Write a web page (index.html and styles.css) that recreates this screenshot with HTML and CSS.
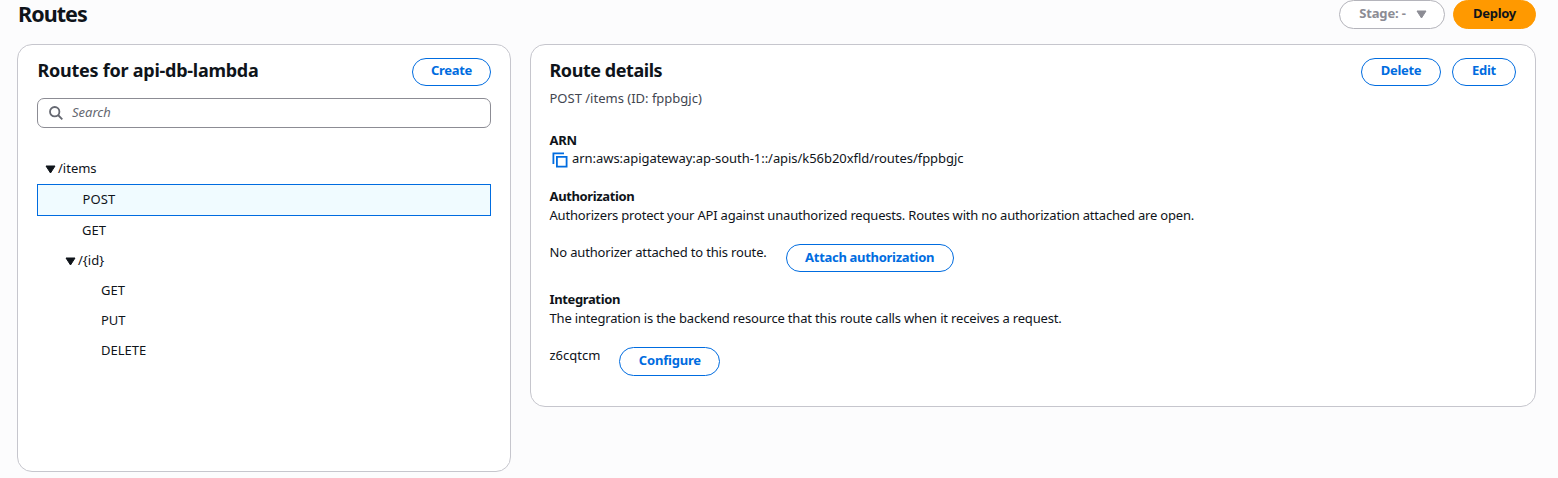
FILE: index.html
```html
<!DOCTYPE html>
<html lang="en">
<head>
<meta charset="utf-8">
<title>Routes</title>
<link rel="stylesheet" href="styles.css">
</head>
<body>
<header class="page-header">
  <h1>Routes</h1>
  <div class="actions">
    <button class="btn stage"><span>Stage: -</span><svg width="11" height="9" viewBox="0 0 11 9"><path d="M1 1h9L5.500 8z" fill="#8c8c94" stroke="#8c8c94" stroke-linejoin="round"/></svg></button>
    <button class="btn primary"><span>Deploy</span></button>
  </div>
</header>
<main class="columns">
  <section class="card routes">
    <div class="card-header"><h2>Routes for api-db-lambda</h2><button class="btn create"><span>Create</span></button></div>
    <div class="search"><svg width="14" height="14" viewBox="0 0 14 14" fill="none" stroke="#656871" stroke-width="1.800"><circle cx="5.700" cy="5.700" r="4.700"/><path d="M9 9l4.300 4.300"/></svg><span class="search-label">Search</span></div>
    <ul class="tree">
      <li class="node l0"><svg width="11" height="9" viewBox="0 0 11 9"><path d="M1 1h9L5.500 8z" fill="#0f141a" stroke="#0f141a" stroke-linejoin="round"/></svg><span>/items</span></li>
      <li class="node l1 selected"><span class="method-post">POST</span></li>
      <li class="node l1"><span>GET</span></li>
      <li class="node l1g"><svg width="11" height="9" viewBox="0 0 11 9"><path d="M1 1h9L5.500 8z" fill="#0f141a" stroke="#0f141a" stroke-linejoin="round"/></svg><span>/{id}</span></li>
      <li class="node l2"><span>GET</span></li>
      <li class="node l2"><span>PUT</span></li>
      <li class="node l2"><span>DELETE</span></li>
    </ul>
  </section>
  <section class="card details">
    <div class="card-header"><h2 class="details-title">Route details</h2><div class="actions"><button class="btn delete"><span>Delete</span></button><button class="btn edit"><span>Edit</span></button></div></div>
    <p class="subtitle">POST /items (ID: fppbgjc)</p>
    <div class="field arn"><h3 class="arn-label">ARN</h3><p><svg class="copy" width="16" height="16" viewBox="0 0 16 16" fill="none" stroke="#006ce0" stroke-width="1.800"><path d="M12 1.400H1.400V12"/><path d="M4.900 4.900h9.700v9.700H4.900z"/></svg><span class="arn-text">arn:aws:apigateway:ap-south-1::/apis/k56b20xfld/routes/fppbgjc</span></p></div>
    <div class="field auth"><h3>Authorization</h3><p class="auth-text">Authorizers protect your API against unauthorized requests. Routes with no authorization attached are open.</p></div>
    <div class="line"><span class="noauth">No authorizer attached to this route.</span><button class="btn attach"><span>Attach authorization</span></button></div>
    <div class="field integration"><h3>Integration</h3><p class="int-text">The integration is the backend resource that this route calls when it receives a request.</p></div>
    <div class="line"><span class="intid">z6cqtcm</span><button class="btn configure"><span>Configure</span></button></div>
  </section>
</main>
</body>
</html>
```
FILE: styles.css
```css
* { box-sizing: border-box; }
body { margin: 0; height: 478px; overflow: hidden; background: #fcfcfd; color: #0f141a; font: 13px/18px "Noto Sans", "Open Sans", sans-serif; }
h1, h2, h3, p, ul { margin: 0; padding: 0; }
span { white-space: nowrap; }
svg { flex: none; }
.page-header { height: 44px; padding: 0 22px 0 18px; display: flex; justify-content: space-between; align-items: flex-start; }
h1 { font-size: 21.500px; line-height: 27px; letter-spacing: -.95px; }
h2 { font-size: 18px; line-height: 24px; letter-spacing: -.25px; }
.routes h2 { padding-left: .5px; }
.details-title { letter-spacing: -.45px; }
h3 { font-size: 13px; line-height: 18px; letter-spacing: -.37px; }
.arn-label { letter-spacing: -.3px; }
.actions { display: flex; gap: 11px; }
.btn { height: 28px; padding: 0 0 3px; border: 1px solid #006ce0; border-radius: 15px; background: #fff; color: #006ce0; font: bold 13px/18px "Noto Sans", sans-serif; letter-spacing: -.3px; display: flex; align-items: center; justify-content: center; }
.card-header .btn { padding-bottom: 4px; }
.page-header .actions { gap: 8px; }
.page-header .btn { height: 29px; }
.stage { width: 106px; gap: 10px; border-color: #b4b4bb; color: #8c8c94; letter-spacing: -.15px; padding-left: 2px; }
.stage svg { margin-top: 2px; }
.primary { width: 83px; background: #ff9900; border-color: #ff9900; color: #0f141a; }
.columns { display: flex; gap: 19px; padding-left: 17px; align-items: flex-start; }
.card { background: #fff; border: 1px solid #c6c6cd; border-radius: 15px; }
.routes { width: 494px; height: 428px; padding: 13px 19px; }
.details { width: 1006px; height: 363px; padding: 13px 19px 13px 18.500px; }
.card-header { display: flex; justify-content: space-between; height: 28px; }
.create { width: 79px; }
.search { height: 30px; margin-top: 12px; border: 1px solid #8c8c94; border-radius: 7px; display: flex; align-items: center; padding-left: 11px; gap: 9px; color: #656871; font-style: italic; }
.search-label { padding-bottom: 2px; }
.tree { list-style: none; margin-top: 26px; }
.node { height: 30px; display: flex; align-items: center; gap: 2px; }
.node span { padding-bottom: 2px; }
.l0 { padding-left: 8px; }
.l1 { padding-left: 45px; }
.l1g { padding-left: 28px; }
.l2 { padding-left: 64px; }
.selected { height: 32px; border: 1px solid #006ce0; background: #f0fbff; padding-left: 44.500px; }
.method-post { letter-spacing: .15px; }
.delete { width: 80px; }
.edit { width: 64px; }
.subtitle { margin-top: 3px; color: #424650; }
.arn { margin-top: 24px; }
.field p { display: flex; height: 19px; align-items: center; }
.copy { margin: 2px 4px 0 2.500px; }
.arn-text { letter-spacing: -.05px; padding-bottom: 1px; }
.auth { margin-top: 19px; }
.auth-text { letter-spacing: -.19px; }
.line { display: flex; height: 29px; gap: 19px; margin-top: 19px; }
.line .btn { margin-top: 1px; }
.noauth { letter-spacing: -.16px; }
.attach { width: 168px; }
.integration { margin-top: 18px; }
.int-text { letter-spacing: -.175px; }
.configure { width: 101px; height: 29px; letter-spacing: -.2px; }
```
